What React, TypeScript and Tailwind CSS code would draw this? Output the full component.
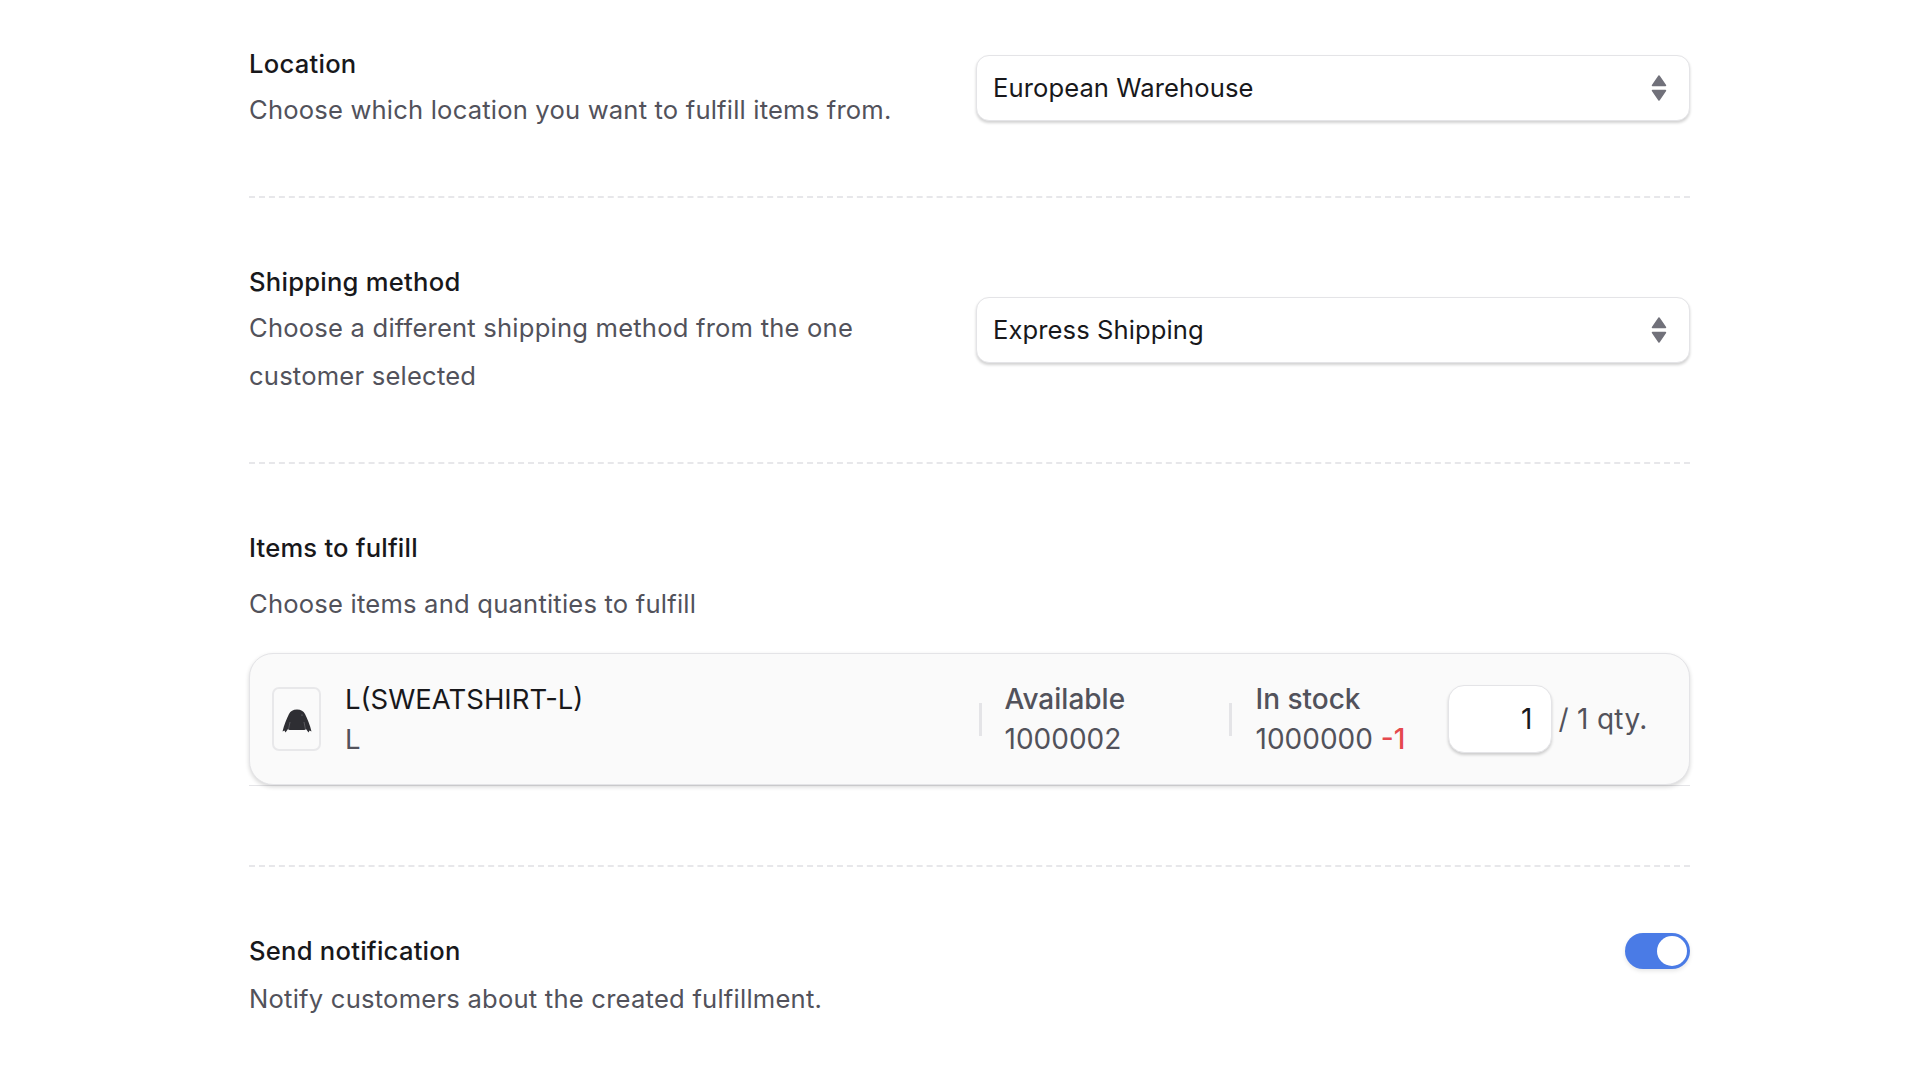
import { useState } from 'react';

function Chevrons() {
  return (
    <svg width="16" height="28" viewBox="0 0 16 28" className="text-[#71717a]" fill="currentColor" stroke="currentColor" strokeWidth="1.5" strokeLinejoin="round">
      <path d="M8 2 L14.5 11.5 L1.5 11.5 Z" />
      <path d="M8 26 L14.5 16.5 L1.5 16.5 Z" />
    </svg>
  );
}

function SelectBox({ value }: { value: string }) {
  return (
    <div className="w-[714px] h-[66px] shrink-0 flex items-center justify-between pl-[16px] pr-[22px] bg-white rounded-[13px] border border-[#e4e4e7] shadow-[0_2px_3px_rgba(0,0,0,0.18)] text-[25.6px] tracking-[0.08px] text-[#18181b]">
      <span>{value}</span>
      <Chevrons />
    </div>
  );
}

function Sweatshirt() {
  return (
    <svg width="30" height="26" viewBox="0 0 30 24" className="mt-[3px]">
      <path
        fill="#2e2e33"
        d="M15 0.5 C11 0.5 8.5 2 7 5 C4.5 10 2 16 0.5 22.5 L2.5 21.5 L3.5 23.5 L6 20 L7.5 21 L22.5 21 L24 20 L26.5 23.5 L27.5 21.5 L29.5 22.5 C28 16 25.5 10 23 5 C21.5 2 19 0.5 15 0.5 Z"
      />
      <path d="M6.5 20.5 L8 13 M23.5 20.5 L22 13" stroke="#6b6b70" strokeWidth="0.7" fill="none" />
      <circle cx="20" cy="6" r="0.6" fill="#8a8a90" />
    </svg>
  );
}

export default function App() {
  const [notify, setNotify] = useState(true);

  return (
    <div className="min-h-screen bg-white font-['Inter',sans-serif] pl-[249px] pr-[234px] pt-[45px]">
      <section className="flex justify-between h-[153px] border-b-2 border-dashed border-[#e7e7ea]">
        <div>
          <h3 className="text-[25.6px] leading-[38px] tracking-[0.25px] font-medium text-[#18181b]">Location</h3>
          <p className="mt-[2.5px] text-[25.6px] leading-[48px] tracking-[0.18px] text-[#52525b]">Choose which location you want to fulfill items from.</p>
        </div>
        <div className="pt-[10px]">
          <SelectBox value="European Warehouse" />
        </div>
      </section>

      <section className="flex justify-between h-[266px] pt-[65px] border-b-2 border-dashed border-[#e7e7ea]">
        <div className="w-[640px]">
          <h3 className="text-[25.6px] leading-[38px] tracking-[0.25px] font-medium text-[#18181b]">Shipping method</h3>
          <p className="mt-[2.5px] text-[25.6px] leading-[48px] tracking-[0.2px] text-[#52525b]">Choose a different shipping method from the one customer selected</p>
        </div>
        <div className="pt-[34px]">
          <SelectBox value="Express Shipping" />
        </div>
      </section>

      <section className="h-[403px] pt-[65px] border-b-2 border-dashed border-[#e7e7ea]">
        <h3 className="text-[25.6px] leading-[38px] tracking-[0.2px] font-medium text-[#18181b]">Items to fulfill</h3>
        <p className="mt-[18px] text-[25.6px] leading-[38px] tracking-[0.2px] text-[#52525b]">Choose items and quantities to fulfill</p>
        <div className="mt-[30px] border-b border-[#e4e4e7]">
          <div className="h-[132px] flex items-center pl-[22px] bg-[#fafafa] rounded-[24px] border border-[#e4e4e7] shadow-[0_2px_4px_rgba(0,0,0,0.16)]">
            <div className="w-[49px] h-[64px] shrink-0 flex items-center justify-center bg-[#fafafa] border-2 border-[#e8e8ea] rounded-[7px]">
              <Sweatshirt />
            </div>
            <div className="ml-[24px] w-[633.5px] shrink-0">
              <p className="text-[27.5px] leading-[40px] text-[#18181b]">L(SWEATSHIRT-L)</p>
              <p className="text-[27.5px] leading-[40px] text-[#52525b]">L</p>
            </div>
            <div className="w-[3px] h-[33px] shrink-0 bg-[#e4e4e7]" />
            <div className="ml-[23px] w-[224px] shrink-0 text-[#52525b]">
              <p className="text-[28px] leading-[40px] font-medium">Available</p>
              <p className="text-[28px] leading-[40px]">1000002</p>
            </div>
            <div className="w-[3px] h-[33px] shrink-0 bg-[#e4e4e7]" />
            <div className="ml-[24px] w-[192px] shrink-0 text-[#52525b]">
              <p className="text-[28px] leading-[40px] font-medium">In stock</p>
              <p className="text-[28px] leading-[40px]">1000000 <span className="text-[#e5484d] font-medium">-1</span></p>
            </div>
            <div className="w-[104px] h-[68px] shrink-0 flex items-center justify-end pr-[18px] bg-white rounded-[16px] border border-[#e4e4e7] shadow-[0_2px_3px_rgba(0,0,0,0.18)] text-[28px] text-[#18181b]">1</div>
            <span className="ml-[7px] text-[28px] tracking-[0.3px] text-[#52525b]">/ 1 qty.</span>
          </div>
        </div>
      </section>

      <section className="flex justify-between pt-[65px]">
        <div>
          <h3 className="text-[25.6px] leading-[38px] tracking-[0.25px] font-medium text-[#18181b]">Send notification</h3>
          <p className="mt-[10px] text-[25.6px] leading-[38px] tracking-[0.22px] text-[#52525b]">Notify customers about the created fulfillment.</p>
        </div>
        <button
          onClick={() => setNotify(!notify)}
          className={`mt-[1px] w-[65px] h-[36px] flex items-center rounded-full px-[3px] shadow-[0_2px_4px_rgba(0,0,0,0.1)] ${notify ? 'justify-end bg-[#4a7be6]' : 'justify-start bg-[#e4e4e7]'}`}
        >
          <span className="w-[30px] h-[30px] rounded-full bg-white" />
        </button>
      </section>
    </div>
  );
}
